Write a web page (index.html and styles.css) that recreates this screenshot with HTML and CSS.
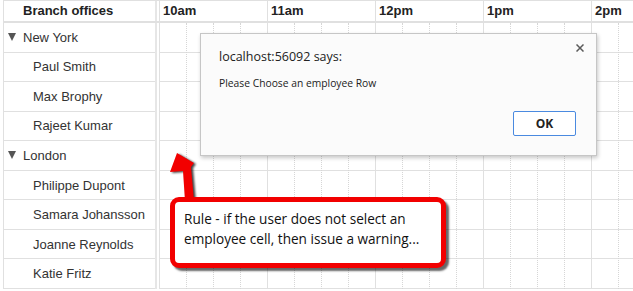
FILE: index.html
```html
<!DOCTYPE html>
<html>
<head>
<meta charset="utf-8">
<link rel="stylesheet" href="styles.css">
</head>
<body>
<div class="page">
  <div class="scheduler">
    <div class="head">
      <div class="res-head">Branch offices</div>
      <div class="time-head">
        <div class="hour">10am</div>
        <div class="hour">11am</div>
        <div class="hour">12pm</div>
        <div class="hour">1pm</div>
        <div class="hour">2pm</div>
      </div>
    </div>
    <div class="body">
      <div class="res-col">
        <div class="row group"><span class="tri"></span>New York</div>
        <div class="row person">Paul Smith</div>
        <div class="row person">Max Brophy</div>
        <div class="row person">Rajeet Kumar</div>
        <div class="row group"><span class="tri"></span>London</div>
        <div class="row person">Philippe Dupont</div>
        <div class="row person">Samara Johansson</div>
        <div class="row person">Joanne Reynolds</div>
        <div class="row person">Katie Fritz</div>
      </div>
      <div class="time-body">
        <div class="trows">
          <div class="trow"></div><div class="trow"></div><div class="trow"></div>
          <div class="trow"></div><div class="trow"></div><div class="trow"></div>
          <div class="trow"></div><div class="trow"></div><div class="trow"></div>
        </div>
        <div class="tcols">
          <div class="col h"></div><div class="col"></div><div class="col"></div><div class="col"></div>
          <div class="col h"></div><div class="col"></div><div class="col"></div><div class="col"></div>
          <div class="col h"></div><div class="col"></div><div class="col"></div><div class="col"></div>
          <div class="col h"></div><div class="col"></div><div class="col"></div><div class="col"></div>
          <div class="col h"></div><div class="col"></div><div class="col"></div><div class="col"></div>
        </div>
      </div>
    </div>
  </div>

  <svg class="arrow" width="633" height="291" viewBox="0 0 633 291">
    <polygon points="177,153 194,163 191,167 194,201 185,201 183,171 170,172" />
  </svg>

  <div class="callout">Rule - if the user does not select an<br>employee cell, then issue a warning...</div>

  <div class="dialog">
    <div class="d-title">localhost:56092 says:</div>
    <div class="d-msg">Please Choose an employee Row</div>
    <div class="d-actions"><button class="ok">OK</button></div>
    <svg class="close" width="8" height="8" viewBox="0 0 8 8"><path d="M0.5 0.5 L7.5 7.5 M7.5 0.5 L0.5 7.5" /></svg>
  </div>
</div>
</body>
</html>
```

FILE: styles.css
```css
html, body {
  margin: 0;
  padding: 0;
  background: #fff;
}

body {
  font-family: "Liberation Sans", Arial, sans-serif;
  color: #333;
}

.page {
  position: relative;
  width: 633px;
  height: 291px;
  overflow: hidden;
}

.scheduler {
  margin-left: 3px;
  width: 700px;
  border-left: 1px solid #e0e0e0;
  border-top: 1px solid #e0e0e0;
}

.head {
  display: flex;
  height: 20px;
  border-bottom: 2px solid #e0e0e0;
}

.res-head {
  flex: none;
  width: 132px;
  padding-left: 19px;
  border-right: 2px solid #e6e6e6;
  font-weight: bold;
  font-size: 13px;
  line-height: 20px;
  color: #222;
}

.time-head {
  display: flex;
  margin-left: 2px;
}

.hour {
  flex: none;
  box-sizing: border-box;
  width: 108px;
  padding-left: 3px;
  border-left: 1px solid #e0e0e0;
  font-weight: bold;
  font-size: 13px;
  line-height: 20px;
  color: #222;
}

.body {
  display: flex;
}

.res-col {
  flex: none;
  width: 151px;
  border-right: 2px solid #e6e6e6;
  display: grid;
  grid-template-rows: repeat(9, 29.56px);
}

.row {
  box-sizing: border-box;
  border-bottom: 1px solid #e0e0e0;
  display: flex;
  align-items: center;
  font-size: 13px;
  color: #333;
}

.group {
  padding-left: 4px;
}

.person {
  padding-left: 29px;
}

.tri {
  width: 0;
  height: 0;
  border-left: 4px solid transparent;
  border-right: 4px solid transparent;
  border-top: 8px solid #555;
  margin-right: 7px;
}

.time-body {
  flex: none;
  margin-left: 2px;
  width: 540px;
  display: grid;
}

.trows, .tcols {
  grid-area: 1 / 1;
}

.trows {
  display: grid;
  grid-template-rows: repeat(9, 29.56px);
}

.trow {
  box-sizing: border-box;
  border-bottom: 1px solid #e0e0e0;
}

.tcols {
  display: flex;
}

.col {
  flex: none;
  box-sizing: border-box;
  width: 27px;
  border-left: 1px dotted #d6d6d6;
}

.col.h {
  border-left: 1px solid #e0e0e0;
}

/* overlays */
.arrow {
  position: absolute;
  left: 0;
  top: 0;
  pointer-events: none;
}

.arrow polygon {
  fill: #f20000;
  filter: drop-shadow(2px 1px 1.2px rgba(0, 0, 0, 0.75));
}

.callout {
  position: absolute;
  left: 170px;
  top: 197px;
  width: 276px;
  height: 71px;
  box-sizing: border-box;
  padding: 7px 9px;
  border: 5px solid #f20000;
  border-radius: 9px;
  background: #fff;
  box-shadow: 3px 3px 2px rgba(0, 0, 0, 0.6);
  font-family: "Open Sans", "Noto Sans", sans-serif;
  font-size: 13.6px;
  line-height: 20px;
  color: #111;
  white-space: nowrap;
}

.dialog {
  position: absolute;
  left: 200px;
  top: 33px;
  width: 397px;
  height: 123px;
  box-sizing: border-box;
  padding: 14px 20px 19px 18px;
  background: #fbfbfb;
  border: 1px solid #c6c6c6;
  box-shadow: 1px 2px 4px rgba(0, 0, 0, 0.22);
  display: flex;
  flex-direction: column;
  font-family: "Open Sans", "Noto Sans", sans-serif;
  color: #222;
}

.d-title {
  font-size: 12.5px;
  line-height: 18px;
}

.d-msg {
  margin-top: 10px;
  font-size: 10.3px;
  line-height: 15px;
}

.d-actions {
  margin-top: auto;
  display: flex;
  justify-content: flex-end;
}

.ok {
  width: 63px;
  height: 25px;
  box-sizing: border-box;
  border: 1px solid #4a8ae0;
  border-radius: 2px;
  background: #fff;
  font-family: "Open Sans", "Noto Sans", sans-serif;
  font-weight: bold;
  font-size: 12px;
  color: #222;
  padding: 0;
}

.close {
  position: absolute;
  right: 12px;
  top: 10px;
}

.close path {
  stroke: #5a5a5a;
  stroke-width: 1.5;
  fill: none;
}
```
